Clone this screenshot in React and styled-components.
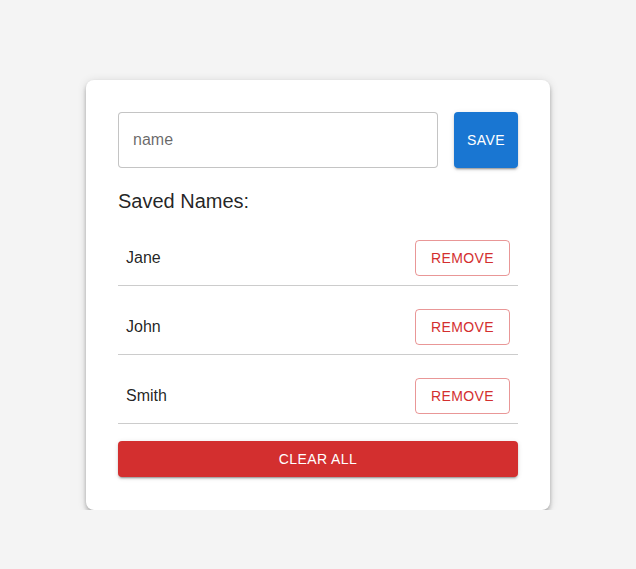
import React, { useState } from 'react'
import styled, { createGlobalStyle } from 'styled-components'

const GlobalStyle = createGlobalStyle`
  html, body {
    margin: 0;
    padding: 0;
    background-color: #f4f4f4;
    font-family: "Liberation Sans", Arial, sans-serif;
  }
`

const Card = styled.div`
  width: 400px;
  margin: 80px auto 0;
  padding: 32px 32px 33px;
  background-color: #fff;
  border-radius: 8px;
  box-shadow: 0 2px 4px -1px rgba(0, 0, 0, 0.2), 0 4px 5px 0 rgba(0, 0, 0, 0.14), 0 1px 10px 0 rgba(0, 0, 0, 0.12);
`

const Form = styled.div`
  display: flex;
  gap: 16px;
  height: 56px;
`

const NameInput = styled.input`
  flex: 1;
  min-width: 0;
  box-sizing: border-box;
  height: 56px;
  padding: 0 14px;
  border: 1px solid rgba(0, 0, 0, 0.23);
  border-radius: 4px;
  font-family: inherit;
  font-size: 16px;
  color: rgba(0, 0, 0, 0.87);
  outline: 0;
  &::placeholder {
    color: rgba(0, 0, 0, 0.6);
  }
`

const Button = styled.button`
  box-sizing: border-box;
  border: 0;
  border-radius: 4px;
  font-family: inherit;
  font-size: 14px;
  letter-spacing: 0.4px;
  text-transform: uppercase;
  cursor: pointer;
  color: #fff;
  background-color: ${p => p.colour};
  box-shadow: 0 3px 1px -2px rgba(0, 0, 0, 0.2), 0 2px 2px 0 rgba(0, 0, 0, 0.14), 0 1px 5px 0 rgba(0, 0, 0, 0.12);
`

const SaveButton = styled(Button)`
  width: 64px;
  height: 56px;
  padding: 0;
`

const ClearButton = styled(Button)`
  display: block;
  width: 100%;
  height: 36px;
  margin-top: 17px;
`

const Heading = styled.h2`
  margin: 17px 0 0;
  font-size: 20px;
  font-weight: 400;
  line-height: 32px;
  color: rgba(0, 0, 0, 0.87);
`

const List = styled.ul`
  margin: 0;
  padding: 0;
  list-style: none;
`

const Row = styled.li`
  display: flex;
  align-items: center;
  justify-content: space-between;
  padding: 23px 8px 9px;
  border-bottom: 1px solid rgba(0, 0, 0, 0.2);
  font-size: 16px;
  color: rgba(0, 0, 0, 0.87);
`

const RemoveButton = styled.button`
  box-sizing: border-box;
  width: 95px;
  height: 36px;
  padding: 0;
  background: transparent;
  border: 1px solid rgba(211, 47, 47, 0.5);
  border-radius: 4px;
  font-family: inherit;
  font-size: 14px;
  letter-spacing: 0.4px;
  color: #d32f2f;
  cursor: pointer;
`

const App = () => {
  const [value, setValue] = useState('')
  const [names, setNames] = useState(['Jane', 'John', 'Smith'])

  const save = () => {
    if (value.trim()) {
      setNames([...names, value.trim()])
      setValue('')
    }
  }

  return (
    <>
      <GlobalStyle />
      <Card>
        <Form>
          <NameInput placeholder='name' value={value} onChange={e => setValue(e.target.value)} />
          <SaveButton colour='#1976d2' onClick={save}>Save</SaveButton>
        </Form>
        <Heading>Saved Names:</Heading>
        <List>
          {names.map((name, i) => (
            <Row key={name + i}>
              <span>{name}</span>
              <RemoveButton onClick={() => setNames(names.filter((_, j) => j !== i))}>REMOVE</RemoveButton>
            </Row>
          ))}
        </List>
        <ClearButton colour='#d32f2f' onClick={() => setNames([])}>Clear all</ClearButton>
      </Card>
    </>
  )
}

export default App
